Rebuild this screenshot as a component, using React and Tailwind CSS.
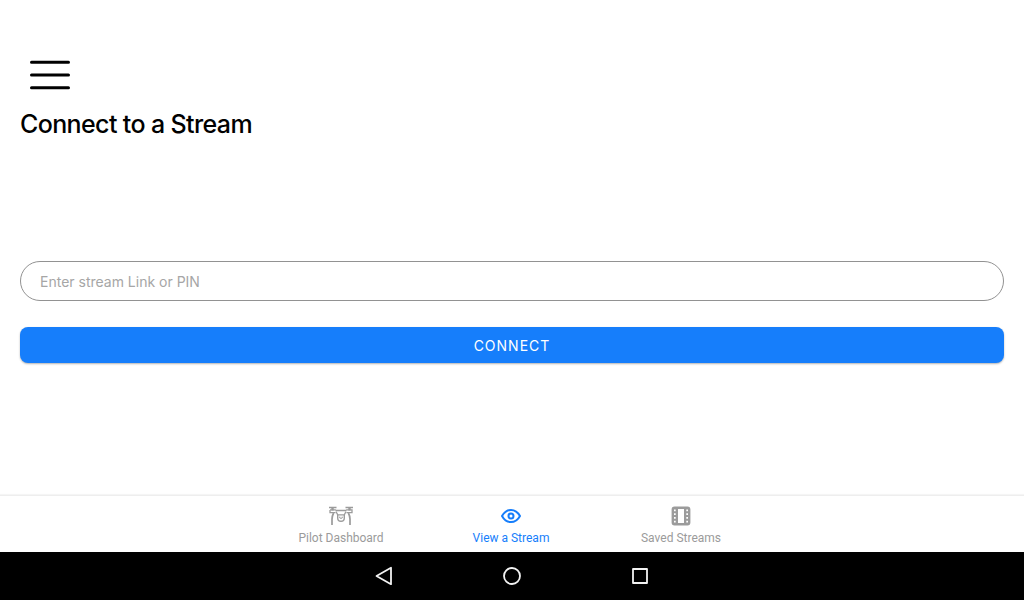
import { useState } from 'react'

const TABS = [
  { id: 'pilot', label: 'Pilot Dashboard', Icon: DroneIcon },
  { id: 'view', label: 'View a Stream', Icon: EyeIcon },
  { id: 'saved', label: 'Saved Streams', Icon: FilmIcon },
]

function MenuIcon() {
  return (
    <svg width="40" height="30" viewBox="0 0 40 30" fill="none" stroke="currentColor" strokeWidth="3" strokeLinecap="round" aria-hidden="true">
      <path d="M1.5 2.3h37M1.5 15h37M1.5 27.7h37" />
    </svg>
  )
}

function DroneIcon() {
  return (
    <svg width="24" height="24" viewBox="0 0 24 24" fill="none" stroke="currentColor" aria-hidden="true">
      <path d="M0 3.5h7.5M16.5 3.5H24" strokeWidth="1.4" />
      <path d="M3.5 3.5v3M20.5 3.5v3" strokeWidth="2.4" />
      <path d="M1 5.9h5.2l1.8.6h8l1.8-.6H23v2.7h-5.500M1 5.900v2.700h5.500" strokeWidth="1.3" />
      <path d="M7 7.500l1.700 3.400h6.600L17 7.500" strokeWidth="1.3" />
      <path d="M8.7 10.9v3a3.300 3.300 0 0 0 6.600 0v-3" strokeWidth="1.4" />
      <path d="M10.800 12.600a1.300 1.300 0 1 0 2.400 0" strokeWidth="1" />
      <path d="M4.600 9C3.600 11 3 13 3 15v6M19.400 9c1 2 1.600 4 1.600 6v6" strokeWidth="1.7" />
    </svg>
  )
}

function EyeIcon() {
  return (
    <svg width="24" height="24" viewBox="0 0 24 24" fill="none" stroke="currentColor" strokeWidth="2" strokeLinejoin="round" aria-hidden="true">
      <path d="M3 12C5.2 8 8.3 5.9 12 5.9S18.800 8 21 12c-2.200 4-5.300 6.100-9 6.100S5.200 16 3 12z" />
      <circle cx="12" cy="12" r="2.5" />
    </svg>
  )
}

function FilmIcon() {
  return (
    <svg width="24" height="24" viewBox="0 0 24 24" fill="currentColor" fillRule="evenodd" aria-hidden="true">
      <path d="M5.500 2.600h13a2.900 2.900 0 0 1 2.900 2.900v13a2.900 2.900 0 0 1-2.900 2.900h-13a2.900 2.900 0 0 1-2.900-2.900v-13a2.900 2.900 0 0 1 2.900-2.900zM9 5v14h6V5zM5 5.600v1.700h1.700V5.600zM5 9.300V11h1.700V9.300zM5 13v1.700h1.700V13zM5 16.700v1.700h1.700v-1.700zM17.300 5.600v1.700H19V5.600zM17.300 9.300V11H19V9.300zM17.300 13v1.700H19V13zM17.300 16.700v1.700H19v-1.700z" />
    </svg>
  )
}

function SystemBar() {
  return (
    <div className="flex h-12 items-center justify-center gap-26 bg-black text-[#f2f2f2]">
      <button type="button" aria-label="Back">
        <svg width="24" height="24" viewBox="0 0 24 24" fill="none" stroke="currentColor" strokeWidth="1.8" strokeLinejoin="round">
          <path d="M19 3.8v16.400L4.500 12z" />
        </svg>
      </button>
      <button type="button" aria-label="Home">
        <svg width="24" height="24" viewBox="0 0 24 24" fill="none" stroke="currentColor" strokeWidth="1.8">
          <circle cx="12" cy="12" r="8" />
        </svg>
      </button>
      <button type="button" aria-label="Recent apps">
        <svg width="24" height="24" viewBox="0 0 24 24" fill="none" stroke="currentColor" strokeWidth="1.8" strokeLinejoin="round">
          <path d="M5 5h14v14H5z" />
        </svg>
      </button>
    </div>
  )
}

export default function App() {
  const [stream, setStream] = useState('')
  const [tab, setTab] = useState('view')

  return (
    <div className="flex min-h-screen flex-col bg-white font-['Inter',sans-serif] text-black">
      <header className="px-5 pt-15">
        <button type="button" aria-label="Menu" className="block px-[10px]">
          <MenuIcon />
        </button>
        <h1 className="mt-[18px] text-[25px] leading-8 font-medium tracking-tight">Connect to a Stream</h1>
      </header>

      <main className="flex flex-1 flex-col justify-center px-5 pb-3">
        <form onSubmit={(e) => e.preventDefault()} className="flex flex-col gap-[26px]">
          <input
            type="text"
            value={stream}
            onChange={(e) => setStream(e.target.value)}
            aria-label="Stream link or PIN"
            placeholder="Enter stream Link or PIN"
            className="h-10 w-full rounded-full border border-[#929292] px-[19px] pt-[2px] text-sm outline-none placeholder:text-[#a6a6a6]"
          />
          <button
            type="submit"
            className="h-9 w-full rounded-lg bg-[#167efb] pt-[2px] text-sm tracking-[1px] text-white shadow-[0_1px_2px_rgba(0,0,0,0.3)]"
          >
            CONNECT
          </button>
        </form>
      </main>

      <nav className="flex h-[57px] justify-center border-t border-[#eeeeee] bg-white pr-[2px] font-['Roboto',sans-serif] shadow-[0_-1px_1px_rgba(0,0,0,0.04)]">
        {TABS.map(({ id, label, Icon }) => (
          <button
            key={id}
            type="button"
            onClick={() => setTab(id)}
            className={`flex w-full max-w-[170px] flex-col items-center pt-2 ${tab === id ? 'text-[#167efb]' : 'text-[#9b9b9b]'}`}
          >
            <Icon />
            <span className="mt-[2px] text-xs leading-4">{label}</span>
          </button>
        ))}
      </nav>

      <SystemBar />
    </div>
  )
}
